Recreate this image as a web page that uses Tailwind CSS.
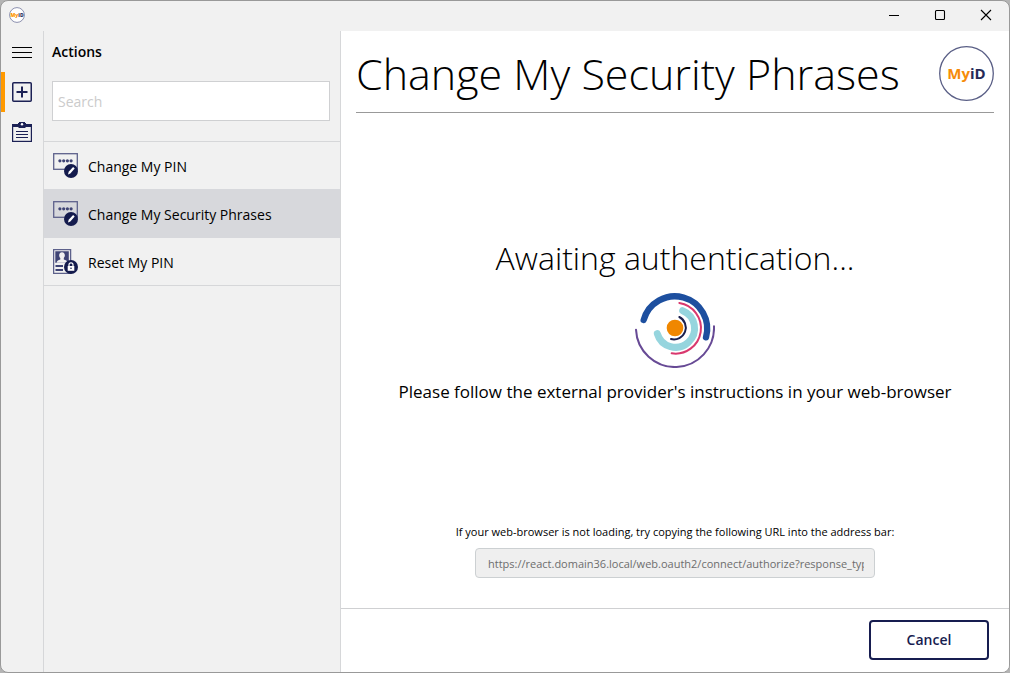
<!DOCTYPE html>
<html lang="en">
<head>
<meta charset="utf-8">
<title>MyID</title>
<script src="https://cdn.jsdelivr.net/npm/@tailwindcss/browser@4"></script>
</head>
<body class="bg-[#b4b4b4] font-['Segoe_UI','Open_Sans','Noto_Sans',sans-serif] text-black">
<svg class="hidden" aria-hidden="true">
  <symbol id="pin-edit" viewBox="0 0 25 25">
    <rect x=".7" y=".7" width="23.6" height="15.6" fill="none" stroke="#5d618b" stroke-width="1.3"/>
    <g fill="#3f4475"><circle cx="6.9" cy="7.8" r="1.6"/><circle cx="10.7" cy="7.8" r="1.6"/><circle cx="14.4" cy="7.8" r="1.6"/><circle cx="18.1" cy="7.8" r="1.6"/></g>
    <circle cx="18" cy="18" r="7" fill="#141b4d"/>
    <path d="M15 21.5l.7-2.7 4.4-4.8 1.6 1.5-4.4 4.9z" fill="#fff"/>
  </symbol>
</svg>
<div class="flex h-screen flex-col overflow-hidden rounded-lg border border-[#999] bg-[#f1f1f1]">
  <header class="flex h-[30px] shrink-0 items-center justify-between pb-0.5 pl-2">
    <svg class="size-4" viewBox="0 0 16 16" role="img" aria-label="MyID">
      <circle cx="8" cy="8" r="7.4" fill="#fff" stroke="#8b8fae" stroke-width="1"/>
      <text x="8" y="10" text-anchor="middle" font-size="5" font-weight="800"><tspan fill="#f90">My</tspan><tspan fill="#30365f">iD</tspan></text>
    </svg>
    <div class="flex h-full">
      <button class="grid w-[46px] place-items-center" aria-label="Minimize"><svg class="size-3" viewBox="0 0 12 12"><path d="M1 6.5h10" stroke="#000"/></svg></button>
      <button class="grid w-[46px] place-items-center" aria-label="Maximize"><svg class="size-3" viewBox="0 0 12 12"><rect x="1.5" y="1.5" width="9" height="9" rx="1" fill="none" stroke="#000" stroke-width="1.1"/></svg></button>
      <button class="grid w-[46px] place-items-center" aria-label="Close"><svg class="size-3" viewBox="0 0 12 12"><path d="M1 1l10 10M11 1L1 11" stroke="#000" stroke-width="1.1"/></svg></button>
    </div>
  </header>
  <div class="flex min-h-0 flex-1">
    <nav class="flex w-[43px] shrink-0 flex-col border-r border-[#d6d7d9] pt-px" aria-label="Main">
      <button class="grid h-10 place-items-center border-l-4 border-transparent pr-1" aria-label="Menu"><svg class="size-5" viewBox="0 0 20 20"><path d="M0 5.5h20M0 10.5h20M0 15.5h20" stroke="#000" stroke-width="1.1"/></svg></button>
      <button class="grid h-10 place-items-center border-l-4 border-[#f90] pr-1" aria-label="Actions"><svg class="size-5" viewBox="0 0 20 20" fill="none" stroke="#1c2155"><rect x=".75" y=".75" width="18.5" height="18.5" rx="1" stroke-width="1.5"/><path d="M10 4.5v11M4.5 10h11" stroke-width="2"/></svg></button>
      <button class="grid h-10 place-items-center border-l-4 border-transparent pr-1" aria-label="Tasks"><svg class="size-5" viewBox="0 0 20 20"><rect x=".6" y="2.6" width="18.8" height="16.8" fill="none" stroke="#1c2155" stroke-width="1.2"/><path d="M0 2h6V1h1V0h6v1h1v1h6v3H13.500v1h-7V5H0z" fill="#1c2155"/><circle cx="10" cy="2.300" r="1.200" fill="#fff"/><path d="M4 9.500h12M4 12.500h12M4 15.500h12" stroke="#1c2155"/></svg></button>
    </nav>
    <aside class="flex w-[297px] shrink-0 flex-col border-r border-[#d6d7d9]">
      <div class="px-2 pt-[9px] pb-5">
        <h2 class="text-sm leading-6 font-semibold">Actions</h2>
        <input type="search" aria-label="Search" placeholder="Search" class="mt-[17px] h-10 w-full max-w-[278px] border border-[#cfd0d2] bg-white px-[5px] text-sm outline-none placeholder:text-[#cbcbcb]">
      </div>
      <ul class="border-y border-[#d6d7d9] text-sm">
        <li><button class="flex h-[47px] w-full items-center gap-2.5 pl-[9px] text-left"><svg class="size-[25px]"><use href="#pin-edit"/></svg><span class="pt-0.5">Change My PIN</span></button></li>
        <li><button class="flex h-[49px] w-full items-center gap-2.5 bg-[#d7d8dc] pl-[9px] text-left" aria-current="true"><svg class="size-[25px]"><use href="#pin-edit"/></svg><span class="pt-0.5">Change My Security Phrases</span></button></li>
        <li><button class="flex h-[47px] w-full items-center gap-2.5 pl-[9px] text-left"><svg class="size-[25px]" viewBox="0 0 25 25"><rect x=".6" y=".6" width="17" height="23.800" fill="#f1f1f1" stroke="#5d618b" stroke-width="1.300"/><path d="M2.300 2.300h13.500v11.500H2.300z" fill="#3f4475"/><path d="M3.500 13.800c.3-2 2-2.600 3.800-3.200V9C5.500 7.500 5.700 3.300 9 3.300S12.500 7.500 10.800 9v1.600c1.700.6 3.600 1.200 3.900 3.200z" fill="#f1f1f1"/><path d="M2.500 17h7.500M2.500 21h7.500" stroke="#3f4475" stroke-width="1.800"/><circle cx="18" cy="18" r="7" fill="#141b4d"/><path d="M14.700 17h6.600v4.800h-6.600z" fill="#fff"/><path d="M16 17.500v-1.700a2 2 0 0 1 4 0v1.700" fill="none" stroke="#fff" stroke-width="1.200"/><circle cx="18" cy="19.200" r=".8" fill="#141b4d"/></svg><span class="pt-0.5">Reset My PIN</span></button></li>
      </ul>
    </aside>
    <main class="flex min-w-0 flex-1 flex-col bg-white">
      <div class="mx-[15px] flex h-[82px] shrink-0 items-center justify-between border-b border-[#999]">
        <h1 class="pt-1 text-[43px] leading-none font-light whitespace-nowrap">Change My Security Phrases</h1>
        <svg class="mt-1 size-14 shrink-0" viewBox="0 0 56 56" role="img" aria-label="MyID">
          <circle cx="28.500" cy="27.500" r="26.800" fill="#fff" stroke="#5a5f86" stroke-width="1.300"/>
          <text x="28.500" y="33" text-anchor="middle" font-size="15" font-weight="700"><tspan fill="#f68b0a">My</tspan><tspan fill="#262b57">iD</tspan></text>
        </svg>
      </div>
      <section class="flex min-h-0 flex-1 flex-col items-center justify-between pt-[121px] pb-[30px]">
        <div class="flex flex-col items-center" role="status">
          <p class="text-[32px] leading-[48px] font-light">Awaiting authentication...</p>
          <svg class="mt-1.5 h-[80px] w-[80px]" viewBox="30 15 240 240" fill="none" stroke-linecap="round" aria-hidden="true">
            <path d="M56 111A97 97 0 0 1 243 163" stroke="#1d4f9f" stroke-width="19"/>
            <path d="M33 140A117 117 0 0 0 267 130" stroke="#674a95" stroke-width="6"/>
            <path d="M173 83A57 57 0 1 1 97 152" stroke="#96d5de" stroke-width="21"/>
            <path d="M163 60A76 76 0 0 1 140 211" stroke="#d9386e" stroke-width="6"/>
            <path d="M163 102A35.500 35.500 0 0 1 138 168" stroke="#1b204e" stroke-width="6"/>
            <circle cx="150" cy="135" r="25" fill="#f08700"/>
          </svg>
          <p class="mt-3 text-[17px] leading-6">Please follow the external provider's instructions in your web-browser</p>
        </div>
        <div class="flex flex-col items-center gap-2">
          <label for="url" class="text-[11px] leading-4">If your web-browser is not loading, try copying the following URL into the address bar:</label>
          <input id="url" readonly value="https://react.domain36.local/web.oauth2/connect/authorize?response_type=code" class="h-[30px] w-[400px] rounded border border-[#ccd0d2] bg-[#efefef] px-3 pr-[10px] text-[11px] text-[#6d6d6d] outline-none">
        </div>
      </section>
      <footer class="flex h-16 shrink-0 items-center justify-end border-t border-[#cfd0d2] px-5 pb-px">
        <button class="h-10 w-[120px] rounded border-2 border-[#171d50] bg-white text-sm font-semibold text-[#171d50]">Cancel</button>
      </footer>
    </main>
  </div>
</div>
</body>
</html>
